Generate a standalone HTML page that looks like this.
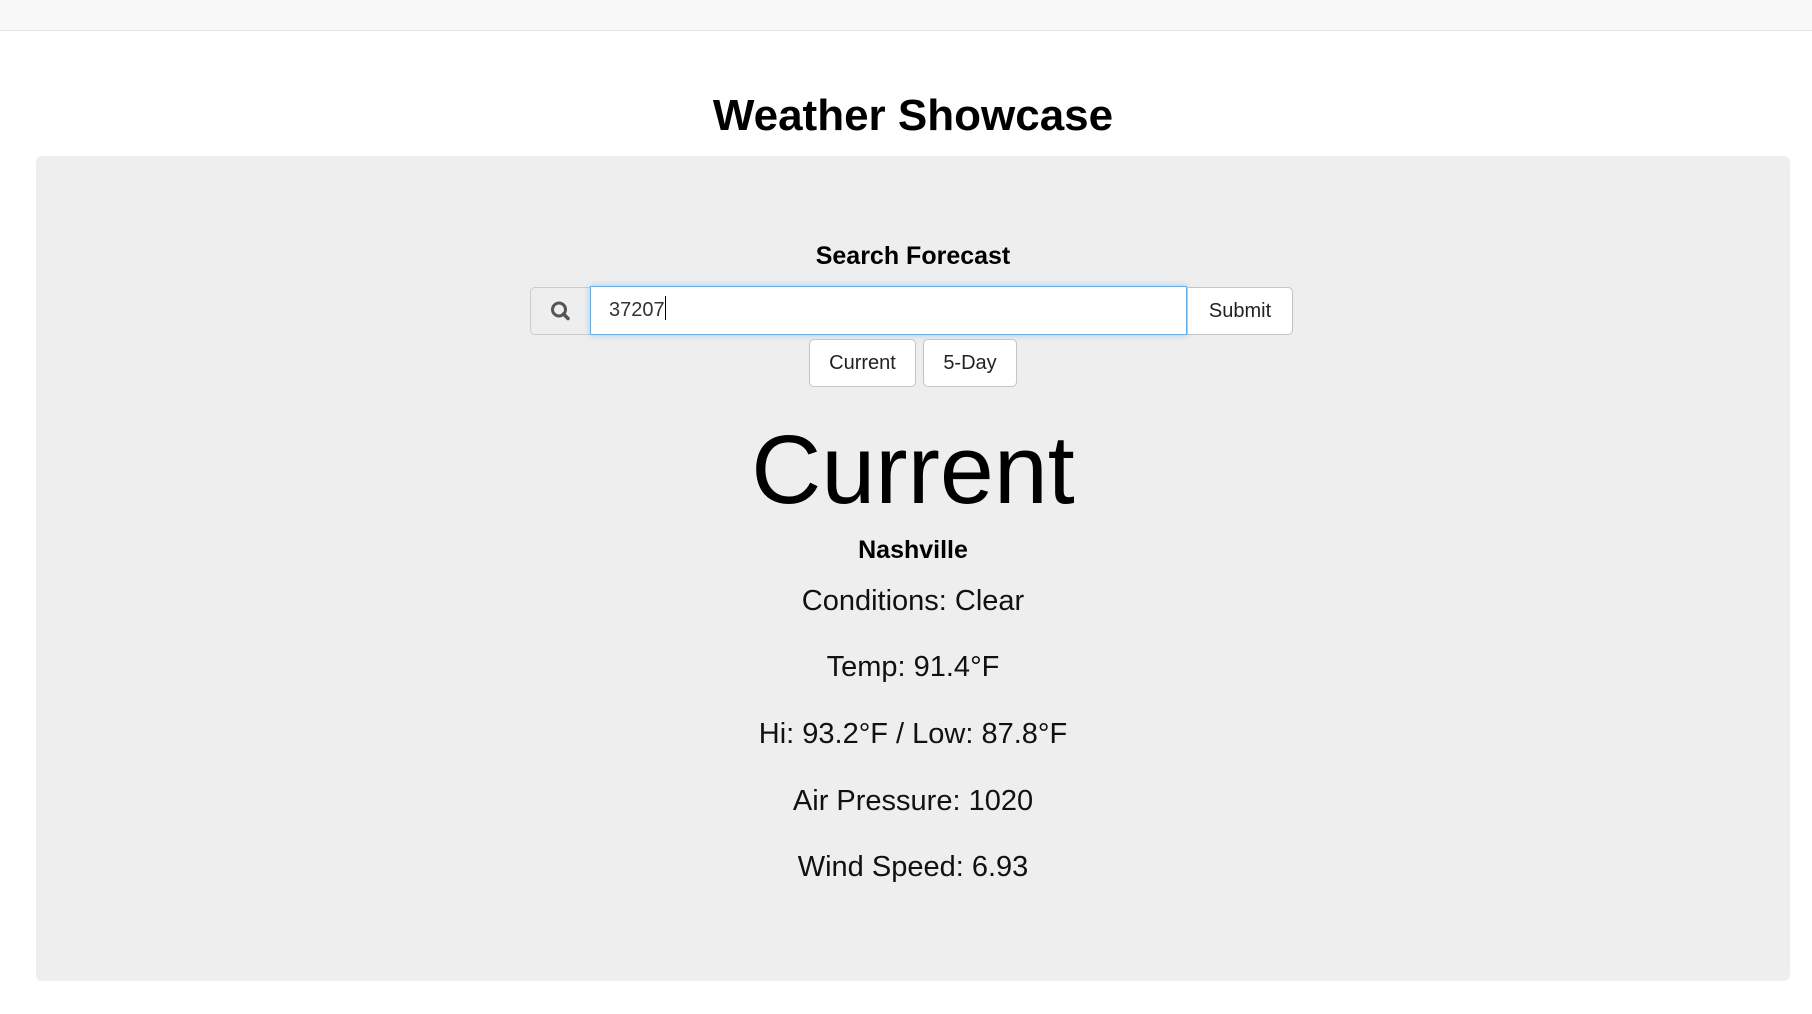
<!DOCTYPE html>
<html><head><meta charset="utf-8">
<style>
html,body{margin:0;padding:0;width:1812px;height:1014px;background:#fff;overflow:hidden;font-family:"Liberation Sans",Arial,sans-serif;color:#000}
.top{position:absolute;left:0;top:0;width:1812px;height:30px;background:#f8f8f8;border-bottom:1px solid #e3e3e3}
.c{position:absolute;left:0;width:1826px;text-align:center;white-space:nowrap}
h1{margin:0;font-size:44px;font-weight:bold;top:90px;line-height:52px}
.well{position:absolute;left:36px;top:156px;width:1754px;height:825px;background:#eeeeee;border-radius:6px}
.sf{top:240px;font-size:25px;font-weight:bold;line-height:32px}
.addon{position:absolute;left:530px;top:287px;width:59px;height:46px;background:#eee;border:1px solid #ccc;border-right:none;border-radius:5px 0 0 5px}
.inp{position:absolute;left:590px;top:286px;width:597px;height:49px;background:#fff;border:1px solid #66afe9;box-shadow:0 0 6px rgba(102,175,233,.6);box-sizing:border-box;font-size:20px;line-height:47px;padding-left:18px;color:#333}
.btn{position:absolute;background:#fff;border:1px solid #c4c4c4;border-radius:5px;box-sizing:border-box;font-size:20px;text-align:center;color:#222}
.big{top:412px;font-size:97px;line-height:116px}
.nash{top:534px;font-size:25px;font-weight:bold;line-height:32px}
.ln{font-size:29px;line-height:36px;color:#111}
</style></head><body>
<div class="top"></div>
<h1 class="c">Weather Showcase</h1>
<div class="well"></div>
<div class="c sf">Search Forecast</div>
<div class="addon"><svg width="59" height="46" viewBox="0 0 59 46"><circle cx="28" cy="21.5" r="6.5" fill="none" stroke="#555" stroke-width="3"/><line x1="32.5" y1="26" x2="37" y2="30.5" stroke="#555" stroke-width="3.5" stroke-linecap="round"/></svg></div>
<div class="inp">37207<span style="display:inline-block;width:1px;height:24px;background:#000;vertical-align:-4px"></span></div>
<div class="btn" style="left:1187px;top:287px;width:106px;height:48px;line-height:46px;border-radius:0 5px 5px 0">Submit</div>
<div class="btn" style="left:809px;top:339px;width:107px;height:48px;line-height:46px">Current</div>
<div class="btn" style="left:923px;top:339px;width:94px;height:48px;line-height:46px">5-Day</div>
<div class="c big">Current</div>
<div class="c nash">Nashville</div>
<div class="c ln" style="top:583px">Conditions: Clear</div>
<div class="c ln" style="top:649px">Temp: 91.4°F</div>
<div class="c ln" style="top:716px">Hi: 93.2°F / Low: 87.8°F</div>
<div class="c ln" style="top:783px">Air Pressure: 1020</div>
<div class="c ln" style="top:849px">Wind Speed: 6.93</div>
</body></html>
